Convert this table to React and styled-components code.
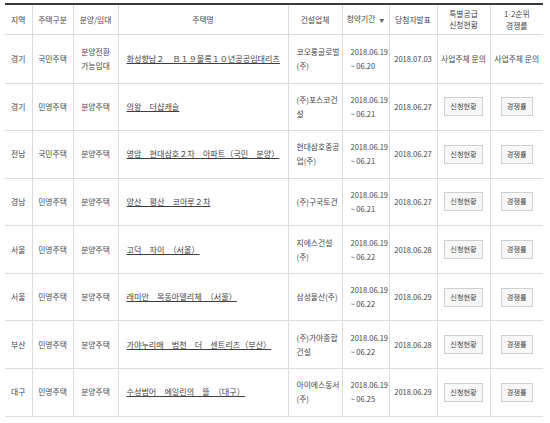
import React from "react";
import styled, { createGlobalStyle } from "styled-components";

const Global = createGlobalStyle`
  html, body { margin: 0; padding: 0; background: #fff; }
  body { font-family: "Noto Sans CJK KR", "Noto Sans", sans-serif; }
`;

const Page = styled.div`
  padding: 3px 7px 0 5px;
  width: 538px;
`;

const Table = styled.table`
  width: 538px;
  table-layout: fixed;
  border-collapse: collapse;
  border-top: 2px solid #3a3a3a;
  font-size: 7.8px;
  color: #454545;
`;

const HeadRow = styled.tr`
  height: 30px;
`;

const Row = styled.tr`
  height: ${(p) => (p.$first ? "49px" : "47.6px")};
`;

const Th = styled.th`
  font-weight: normal;
  text-align: center;
  vertical-align: middle;
  line-height: 11px;
  padding: 0 2px;
  border-bottom: 1px solid #d9d9d9;
  border-left: 1px solid #dcdcdc;
  white-space: nowrap;
  &:first-child { border-left: none; }
`;

const Td = styled.td`
  text-align: ${(p) => p.$align || "center"};
  padding: ${(p) => (p.$align === "left" ? `0 0 0 ${p.$pad || 8}px` : "0")};
  font-size: ${(p) => p.$size || "inherit"};
  vertical-align: middle;
  line-height: 14px;
  border-bottom: 1px solid #dcdcdc;
  border-left: 1px solid #dcdcdc;
  white-space: nowrap;
  overflow: hidden;
  &:first-child { border-left: none; }
`;

const Line = styled.span`
  display: block;
`;

const Dot = styled.span`
  font-family: "Liberation Sans", sans-serif;
`;

const NameLink = styled.a`
  color: #3f3f3f;
  font-size: 8.1px;
  text-decoration: underline;
  text-underline-offset: 1px;
  cursor: pointer;
`;

const SortMark = styled.span`
  font-size: 5px;
  margin-left: 4px;
  vertical-align: middle;
  color: #666;
`;

const SmallButton = styled.button`
  height: 19px;
  padding: 0 5px;
  border: 1px solid #cfcfcf;
  background: #f7f7f7;
  color: #4a4a4a;
  font-family: "Noto Sans CJK KR", sans-serif;
  font-size: 7.2px;
  line-height: 17px;
  cursor: pointer;
`;

const widths = [27, 41, 45, 170, 54, 47, 48, 53, 53];

const rows = [
  {
    region: "경기", type: "국민주택", sale: ["분양전환", "가능임대"],
    name: "화성향남２　Ｂ１９블록１０년공공임대리츠",
    builder: ["코오롱글로벌", "(주)"], period: "~ 06.20", announce: "2018.07.03", inquiry: true,
  },
  {
    region: "경기", type: "민영주택", sale: ["분양주택"], name: "의왕　더샵캐슬",
    builder: ["(주)포스코건", "설"], period: "~ 06.21", announce: "2018.06.27",
  },
  {
    region: "전남", type: "국민주택", sale: ["분양주택"],
    name: "영암　현대삼호２차　아파트（국민　분양）",
    builder: ["현대삼호중공", "업(주)"], period: "~ 06.21", announce: "2018.06.27",
  },
  {
    region: "경남", type: "민영주택", sale: ["분양주택"], name: "양산　평산　코아루２차",
    builder: ["(주)구국토건"], period: "~ 06.21", announce: "2018.06.27",
  },
  {
    region: "서울", type: "민영주택", sale: ["분양주택"], name: "고덕　자이　（서울）",
    builder: ["지에스건설", "(주)"], period: "~ 06.22", announce: "2018.06.28",
  },
  {
    region: "서울", type: "민영주택", sale: ["분양주택"], name: "래미안　목동아델리체　（서울）",
    builder: ["삼성물산(주)"], period: "~ 06.22", announce: "2018.06.29",
  },
  {
    region: "부산", type: "민영주택", sale: ["분양주택"], name: "가야누리애　범천　더　센트리즈（부산）",
    builder: ["(주)가야종합", "건설"], period: "~ 06.22", announce: "2018.06.28",
  },
  {
    region: "대구", type: "민영주택", sale: ["분양주택"], name: "수성범어　에일린의　뜰　（대구）",
    builder: ["아이에스동서", "(주)"], period: "~ 06.25", announce: "2018.06.29",
  },
];

export default function App() {
  return (
    <Page>
      <Global />
      <Table>
        <colgroup>
          {widths.map((w, i) => (
            <col key={i} style={{ width: w }} />
          ))}
        </colgroup>
        <thead>
          <HeadRow>
            <Th>지역</Th>
            <Th>주택구분</Th>
            <Th>분양/임대</Th>
            <Th>주택명</Th>
            <Th>건설업체</Th>
            <Th>
              청약기간<SortMark>▼</SortMark>
            </Th>
            <Th>당첨자발표</Th>
            <Th>
              <Line>특별공급</Line>
              <Line>신청현황</Line>
            </Th>
            <Th>
              <Line>
                1<Dot>·</Dot>2순위
              </Line>
              <Line>경쟁률</Line>
            </Th>
          </HeadRow>
        </thead>
        <tbody>
          {rows.map((r, i) => (
            <Row key={i} $first={i === 0}>
              <Td>{r.region}</Td>
              <Td>{r.type}</Td>
              <Td>
                {r.sale.map((s) => (
                  <Line key={s}>{s}</Line>
                ))}
              </Td>
              <Td $align="left">
                <NameLink>{r.name}</NameLink>
              </Td>
              <Td $align="left">
                {r.builder.map((b) => (
                  <Line key={b}>{b}</Line>
                ))}
              </Td>
              <Td $align="left" $pad={8} $size="7.5px">
                <Line>2018.06.19</Line>
                <Line>{r.period}</Line>
              </Td>
              <Td $size="7.5px">{r.announce}</Td>
              <Td>{r.inquiry ? "사업주체 문의" : <SmallButton>신청현황</SmallButton>}</Td>
              <Td>{r.inquiry ? "사업주체 문의" : <SmallButton>경쟁률</SmallButton>}</Td>
            </Row>
          ))}
        </tbody>
      </Table>
    </Page>
  );
}
